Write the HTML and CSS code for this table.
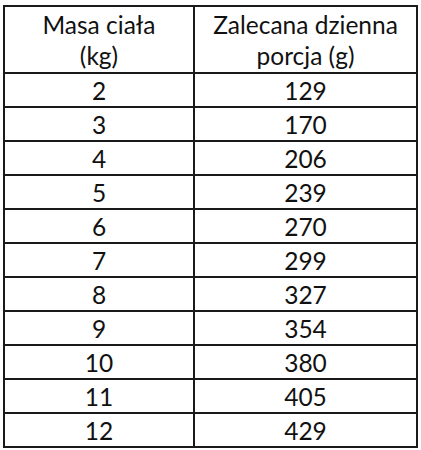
FILE: index.html
```html
<!DOCTYPE html>
<html lang="pl">
<head>
<meta charset="utf-8">
<link rel="stylesheet" href="styles.css">
</head>
<body>
<table class="dose">
  <colgroup><col class="c1"><col class="c2"></colgroup>
  <thead>
    <tr class="head"><th>Masa ciała<br>(kg)</th><th>Zalecana dzienna<br>porcja (g)</th></tr>
  </thead>
  <tbody>
    <tr><td>2</td><td>129</td></tr>
    <tr><td>3</td><td>170</td></tr>
    <tr><td>4</td><td>206</td></tr>
    <tr><td>5</td><td>239</td></tr>
    <tr><td>6</td><td>270</td></tr>
    <tr><td>7</td><td>299</td></tr>
    <tr><td>8</td><td>327</td></tr>
    <tr><td>9</td><td>354</td></tr>
    <tr><td>10</td><td>380</td></tr>
    <tr><td>11</td><td>405</td></tr>
    <tr><td>12</td><td>429</td></tr>
  </tbody>
</table>
</body>
</html>
```
FILE: styles.css
```css
html, body {
  margin: 0;
  padding: 0;
  background: #ffffff;
}
body {
  padding: 5px 0 0 3px;
  font-family: Lato, "Liberation Sans", sans-serif;
  color: #111111;
}
.dose {
  border-collapse: collapse;
  table-layout: fixed;
  width: 413px;
}
.c1 { width: 190px; }
.c2 { width: 223px; }
.dose th, .dose td {
  border: 2px solid #1a1a1a;
  text-align: center;
  vertical-align: middle;
  padding: 0;
  font-size: 24.5px;
  font-weight: 400;
  line-height: 31px;
}
.head { height: 67px; }
.dose tbody tr { height: 34px; }
```
